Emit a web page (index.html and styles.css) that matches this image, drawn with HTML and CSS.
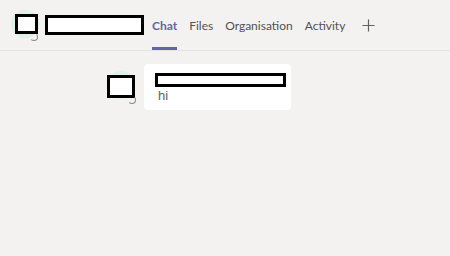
FILE: index.html
```html
<!DOCTYPE html>
<html>
<head>
  <meta charset="UTF-8">
  <title>Chat</title>
  <link rel="stylesheet" href="styles.css">
</head>
<body>
  <div class="header">
    <div class="avatar avatar-top">
      <span class="redact redact-avatar"></span>
      <span class="status"></span>
    </div>
    <span class="redact redact-title"></span>
    <nav class="tabs">
      <span class="tab active">Chat</span>
      <span class="tab">Files</span>
      <span class="tab">Organisation</span>
      <span class="tab">Activity</span>
      <span class="tab add">
        <svg width="13" height="13" viewBox="0 0 13 13">
          <path d="M6.5 0.5v12M0.5 6.5h12" stroke="#616161" stroke-width="1.2" fill="none"/>
        </svg>
      </span>
    </nav>
  </div>

  <div class="messages">
    <div class="message">
      <div class="avatar avatar-msg">
        <span class="redact redact-avatar-msg"></span>
        <span class="status"></span>
      </div>
      <div class="bubble">
        <span class="redact redact-sender"></span>
        <div class="text">hi</div>
      </div>
    </div>
  </div>
</body>
</html>
```

FILE: styles.css
```css
body {
  margin: 0;
  background: #f3f2f1;
  font-family: "Liberation Sans", Arial, sans-serif;
  color: #252423;
}

.header {
  display: flex;
  align-items: center;
  height: 50px;
  border-bottom: 1px solid #e6e4e2;
  padding-left: 11px;
}

.avatar {
  position: relative;
  width: 28px;
  height: 28px;
  border-radius: 50%;
  background: #dcf1e7;
  flex-shrink: 0;
}

.avatar-top {
  margin-top: -2px;
}

.redact {
  display: block;
  box-sizing: border-box;
  border: 3px solid #000;
  background: #fff;
}

.redact-avatar {
  position: absolute;
  left: 4px;
  top: 4px;
  width: 23px;
  height: 20px;
}

.status {
  position: absolute;
  left: 19px;
  top: 23px;
  width: 6px;
  height: 6px;
  border-radius: 50%;
  border: 1px solid #8a8886;
  border-top-color: transparent;
  border-left-color: transparent;
}

.redact-title {
  width: 99px;
  height: 20px;
  margin-left: 6px;
}

.tabs {
  display: flex;
  align-self: stretch;
  align-items: stretch;
  gap: 12px;
  margin-left: 8px;
}

.tab {
  display: flex;
  align-items: center;
  font-family: Lato, "Liberation Sans", sans-serif;
  font-size: 12px;
  color: #525150;
  border-bottom: 3px solid transparent;
  padding-top: 3px;
}

.tab.active {
  color: #6264a7;
  font-weight: bold;
  border-bottom-color: #6264a7;
}

.tab.add {
  margin-left: 5px;
}

.messages {
  padding: 13px 0 0 107px;
}

.message {
  display: flex;
  gap: 9px;
}

.avatar-msg {
  margin-top: 7px;
}

.redact-avatar-msg {
  position: absolute;
  left: 0;
  top: 4px;
  width: 28px;
  height: 23px;
}

.avatar-msg .status {
  left: 21px;
  top: 25px;
}

.bubble {
  box-sizing: border-box;
  width: 147px;
  height: 46px;
  background: #fff;
  border-radius: 4px;
  padding: 9px 5px 0 11px;
}

.redact-sender {
  width: 131px;
  height: 14px;
}

.text {
  font-size: 13px;
  color: #616161;
  padding-left: 3px;
  margin-top: 1px;
}
```
